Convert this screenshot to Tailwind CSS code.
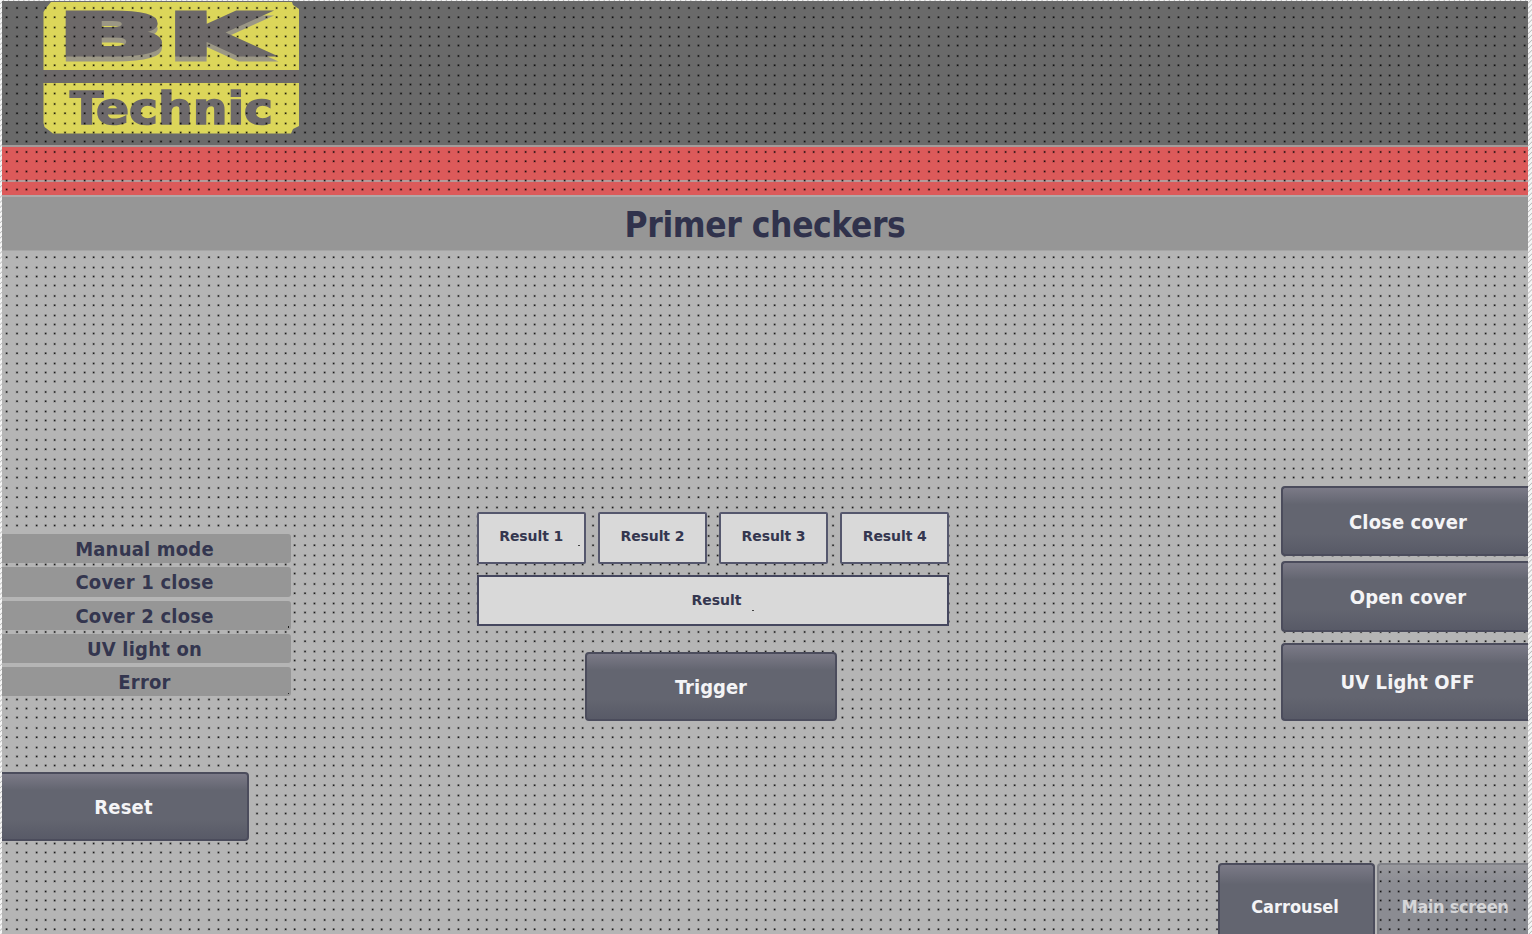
<!DOCTYPE html>
<html lang="en">
<head>
<meta charset="utf-8">
<title>Primer checkers</title>
<script src="https://cdn.jsdelivr.net/npm/@tailwindcss/browser@4"></script>
</head>
<body class="h-[934px] w-[1532px] overflow-hidden bg-[repeating-linear-gradient(135deg,#f4f4f4_0px,#f4f4f4_2px,#bcbcbc_2.8px,#f4f4f4_3.6px)] font-['DejaVu_Sans_Condensed','DejaVu_Sans',sans-serif] font-bold [font-stretch:condensed]">
<div class="relative flex h-[934px] w-full flex-col pt-px pr-[4px] pl-[2px]">
  <!-- editor grid -->
  <svg class="pointer-events-none absolute top-px left-[2px] z-10 h-[933px] w-[1526px]" aria-hidden="true">
    <defs>
      <pattern id="grid" width="48" height="48" patternUnits="userSpaceOnUse" x="-2" y="-1">
        <g stroke="#000" fill="none">
          <path stroke-width="3" stroke-opacity=".1" d="M5 8H8M15.500 8h3M25 8h3M35 8h3M44 8h3M5 17.500H8M15.500 17.500h3M25 17.500h3M35 17.500h3M44 17.500h3M5 27.500H8M15.500 27.500h3M25 27.500h3M35 27.500h3M44 27.500h3M5 36.500H8M15.500 36.500h3M25 36.500h3M35 36.500h3M44 36.500h3M5 45.500H8M15.500 45.500h3M25 45.500h3M35 45.500h3M44 45.500h3"/>
          <path stroke-width="1.5" stroke-opacity=".84" d="M5.900 8h1.500M16.300 8h1.500M25.700 8h1.500M35.900 8h1.500M44.900 8h1.500M5.900 17.300h1.500M16.300 17.300h1.500M25.700 17.300h1.500M35.900 17.300h1.500M44.900 17.300h1.500M5.900 27.500h1.500M16.300 27.500h1.500M25.700 27.500h1.500M35.900 27.500h1.500M44.900 27.500h1.500M5.900 36.400h1.500M16.300 36.400h1.500M25.700 36.400h1.500M35.900 36.400h1.500M44.900 36.400h1.500M5.900 45.500h1.500M16.300 45.500h1.500M25.700 45.500h1.500M35.900 45.500h1.500M44.900 45.500h1.500"/>
        </g>
      </pattern>
    </defs>
    <rect width="1526" height="933" fill="url(#grid)"/>
  </svg>

  <header class="h-[144px] shrink-0 bg-[#6a6a6a] pl-[41px]">
    <svg class="block" width="257" height="134" viewBox="43 1 257 134">
      <path d="M51 2H292L293 5L299 9V70H43.500V12L46 8Z" fill="#dcd65a"/>
      <rect x="43.500" y="70" width="255.500" height="13" fill="#6d6969"/>
      <path d="M43.500 83H299V126L293 129L291 133.500H53L44.500 127L43.500 123Z" fill="#dcd65a"/>
      <g font-family="DejaVu Sans" font-weight="700" font-size="59" stroke-width="3" fill="#6d6969" stroke="#6d6969" class="[filter:drop-shadow(0_5px_0_#9b9785)]">
        <text transform="translate(56.500 55) scale(2.76 1)">B</text>
        <text transform="translate(167 55) scale(2.42 1)">K</text>
      </g>
      <text x="70" y="123.500" font-family="DejaVu Sans" font-weight="700" font-size="45" textLength="203" lengthAdjust="spacingAndGlyphs" fill="#6d696b" stroke="#6d696b" stroke-width="1.500">Technic</text>
    </svg>
  </header>
  <div class="h-[50px] shrink-0 border-t-2 border-[#a39b9b] bg-[#dc5a5a] pt-[33px]"><div class="h-[1.5px] bg-[#b59a9a]"></div></div>
  <div class="relative z-20 flex h-[56px] shrink-0 items-center justify-center border-t-2 border-b border-t-[#b0a8a8] border-b-[#a6a6a6] bg-[#969696] pt-[3px] text-[35px] tracking-[-0.4px] text-[#30324c]"><h1>Primer checkers</h1></div>

  <main class="flex grow items-start bg-[#b5b5b5]">
    <section class="flex w-[289px] flex-col pt-[283px]">
      <ul class="relative z-20 flex flex-col gap-[4px] text-center text-[20px] leading-[30.500px] tracking-[0.2px] text-[#34364f]">
        <li class="h-[29.300px] rounded-r-[3px] bg-[#969696] pr-[4px]">Manual mode</li>
        <li class="h-[29.300px] rounded-r-[3px] bg-[#969696] pr-[4px]">Cover 1 close</li>
        <li class="relative h-[29.300px] rounded-r-[3px] bg-[#969696] pr-[4px]">Cover 2 close<i class="absolute right-[2px] bottom-[2px] size-[1.5px] bg-[#222]"></i></li>
        <li class="h-[29.300px] rounded-r-[3px] bg-[#969696] pr-[4px]">UV light on</li>
        <li class="relative h-[29.300px] rounded-r-[3px] bg-[#969696] pr-[4px]">Error<i class="absolute right-[2px] bottom-[2px] size-[1.5px] bg-[#222]"></i></li>
      </ul>
      <button class="relative z-20 mt-[76px] h-[69px] w-[247px] rounded-r-[4px] border-2 border-l-0 border-[#4b4c5c] bg-[linear-gradient(#7b7a87,#636570_25%,#636570_70%,#585a67)] pr-[2px] text-[20px] tracking-[0.2px] text-[#f4f4f6]">Reset</button>
    </section>

    <section class="mt-[261px] mr-auto ml-[186px] flex w-[472px] flex-col">
      <div class="relative z-20 flex justify-between font-['DejaVu_Sans'] text-[14px] tracking-[-0.1px] text-[#34364f] [font-stretch:normal]">
        <div class="relative flex h-[52px] w-[108.500px] items-center justify-center rounded-[2px] border-2 border-[#55576d] bg-[#d9d9d9] pb-[3px]">Result 1<i class="absolute right-[4px] bottom-[16px] size-[1.5px] bg-[#444]"></i></div>
        <div class="flex h-[52px] w-[108.500px] items-center justify-center rounded-[2px] border-2 border-[#55576d] bg-[#d9d9d9] pb-[3px]">Result 2</div>
        <div class="flex h-[52px] w-[108.500px] items-center justify-center rounded-[2px] border-2 border-[#55576d] bg-[#d9d9d9] pb-[3px]">Result 3</div>
        <div class="flex h-[52px] w-[108.500px] items-center justify-center rounded-[2px] border-2 border-[#55576d] bg-[#d9d9d9] pb-[3px]">Result 4</div>
      </div>
      <div class="relative z-20 mt-[11px] flex h-[51px] items-center justify-center border-2 border-[#45475f] bg-[#d9d9d9] pl-[7px] font-['DejaVu_Sans'] text-[14px] text-[#34364f] [font-stretch:normal]">Result<i class="absolute bottom-[13px] left-[273px] size-[1.5px] bg-[#444]"></i></div>
      <button class="relative z-20 mt-[26px] ml-[108px] h-[69px] w-[252px] rounded-[4px] border-2 border-[#4b4c5c] bg-[linear-gradient(#7b7a87,#636570_25%,#636570_70%,#585a67)] text-[20px] text-[#f4f4f6]">Trigger</button>
    </section>

    <section class="mt-[235px] flex w-[310px] flex-col items-end">
      <div class="relative z-20 flex w-[247px] flex-col text-[20px] tracking-[0.1px] text-[#f4f4f6]">
        <button class="h-[70px] rounded-l-[4px] border-2 border-r-0 border-[#4b4c5c] bg-[linear-gradient(#7b7a87,#636570_25%,#636570_70%,#585a67)] pt-px pl-[5px]">Close cover</button>
        <button class="mt-[5px] h-[71px] rounded-l-[4px] border-2 border-r-0 border-[#4b4c5c] bg-[linear-gradient(#7b7a87,#636570_25%,#636570_70%,#585a67)] pl-[5px]">Open cover</button>
        <button class="mt-[11px] h-[78px] rounded-l-[4px] border-2 border-r-0 border-[#4b4c5c] bg-[linear-gradient(#7b7a87,#636570_25%,#636570_70%,#585a67)] pl-[4px]">UV Light OFF</button>
      </div>
      <nav class="mt-[142px] flex gap-[2px] text-[18px]">
        <button class="relative z-20 h-[71px] w-[157px] rounded-t-[4px] border-2 border-b-0 border-[#4b4c5c] bg-[linear-gradient(#7b7a87,#636570_28%)] pt-[13px] pr-[3px] text-[#f4f4f6]">Carrousel</button>
        <button class="h-[71px] w-[151px] rounded-tl-[4px] border-2 border-r-0 border-b-0 border-[#818288] bg-[linear-gradient(#98989d,#8b8c92_28%)] pt-[13px] pl-[3px] tracking-[-0.3px] text-[#d6d6d8]">Main screen</button>
      </nav>
    </section>
  </main>
</div>
</body>
</html>
